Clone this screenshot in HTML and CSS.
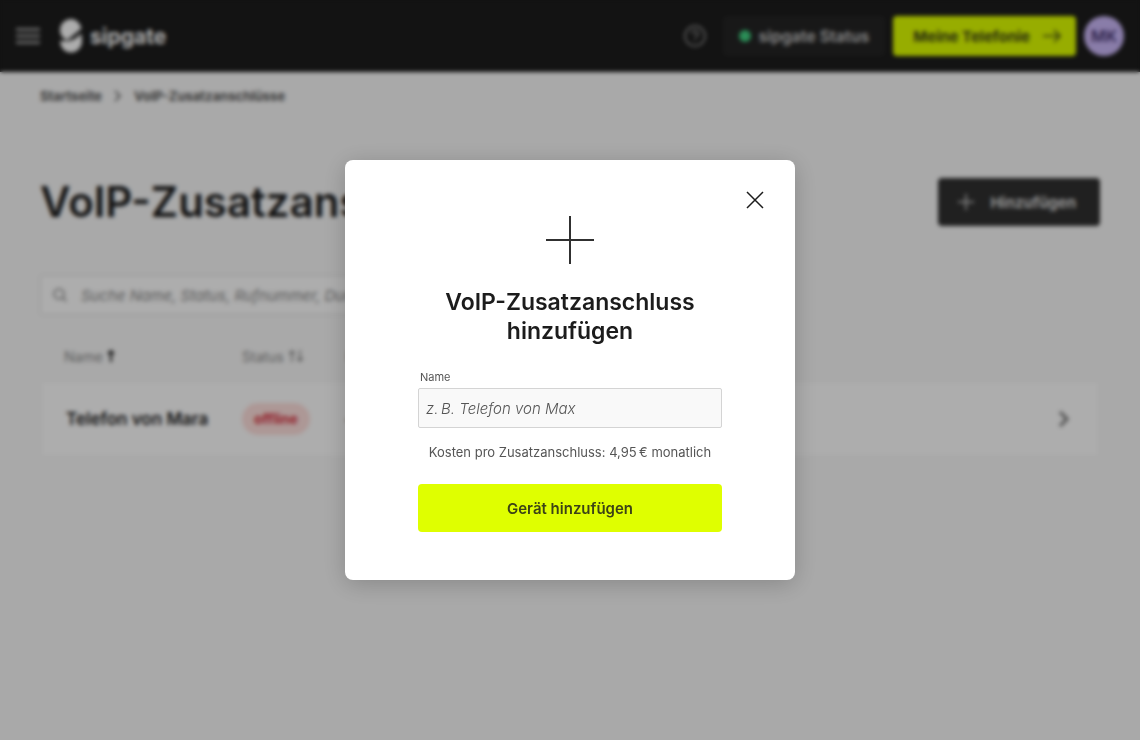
FILE: index.html
```html
<!DOCTYPE html>
<html lang="de">
<head>
  <meta charset="UTF-8">
  <meta name="viewport" content="width=device-width, initial-scale=1.0">
  <title>VoIP-Zusatzanschlüsse</title>
  <link rel="stylesheet" href="styles.css">
</head>
<body>
  <header class="topbar">
    <button class="menu-button" type="button" aria-label="Menü">
      <svg width="24" height="16" viewBox="0 0 24 16" fill="none" stroke="currentColor" stroke-width="3">
        <path d="M0 1.500h24M0 8h24M0 14.500h24"/>
      </svg>
    </button>
    <a class="logo" href="#">
      <svg width="22" height="34" viewBox="0 0 22 34" fill="currentColor">
        <path d="M11 0C16 0 20 4 21.500 9.500L7.500 21C3 20 0 16 0 11 0 5 5 0 11 0Z"/>
        <path d="M0 22h8.500C13 21.500 18 18 21 14.500c.8 2 1 5 1 8C22 28.500 17 33.500 11 33.500 5 33.500 .5 29 0 22Z"/>
      </svg>
      <span>sipgate</span>
    </a>
    <nav class="topbar-nav">
      <a class="help" href="#" aria-label="Hilfe">
        <svg width="24" height="24" viewBox="0 0 24 24" fill="none" stroke="currentColor" stroke-width="1.500">
          <circle cx="12" cy="12" r="10"/>
          <path d="M9 9.700a3 3 0 1 1 4.200 2.700c-.8.4-1.200.8-1.200 1.800M12 16v1.600"/>
        </svg>
      </a>
      <a class="status-link" href="#"><span class="status-dot"></span>sipgate Status</a>
      <a class="phone-link" href="#">Meine Telefonie
        <svg width="20" height="16" viewBox="0 0 20 16" fill="none" stroke="currentColor" stroke-width="1.500">
          <path d="M1 8h17M12 2l6 6-6 6"/>
        </svg>
      </a>
      <button class="avatar" type="button">MK</button>
    </nav>
  </header>

  <main class="page">
    <nav class="breadcrumb">
      <a href="#">Startseite</a>
      <svg width="8" height="12" viewBox="0 0 8 12" fill="none" stroke="currentColor" stroke-width="1.500">
        <path d="M1 1l5 5-5 5"/>
      </svg>
      <a href="#">VoIP-Zusatzanschlüsse</a>
    </nav>

    <div class="page-head">
      <h1>VoIP-Zusatzanschlüsse</h1>
      <button class="add-button" type="button">
        <svg width="16" height="16" viewBox="0 0 16 16" fill="none" stroke="currentColor" stroke-width="1.500">
          <path d="M8 0v16M0 8h16"/>
        </svg>
        Hinzufügen
      </button>
    </div>

    <label class="search">
      <svg width="14" height="14" viewBox="0 0 14 14" fill="none" stroke="currentColor" stroke-width="1.500">
        <circle cx="6" cy="6" r="5"/>
        <path d="M9.600 9.600L13.500 13.500"/>
      </svg>
      <input type="search" aria-label="Suche" placeholder="Suche Name, Status, Rufnummer, Durchwahl">
    </label>

    <table class="devices">
      <thead>
        <tr>
          <th class="col-name">Name
            <svg class="sorted" width="8" height="12" viewBox="0 0 8 12" fill="none" stroke="currentColor" stroke-width="2">
              <path d="M4 12V1M1 4l3-3 3 3"/>
            </svg>
          </th>
          <th class="col-status">Status
            <svg width="16" height="12" viewBox="0 0 16 12" fill="none" stroke="currentColor" stroke-width="1.500">
              <path d="M4 12V1M1 4l3-3 3 3M12 0v11M9 8l3 3 3-3"/>
            </svg>
          </th>
          <th>Rufnummer</th>
          <th class="col-open"></th>
        </tr>
      </thead>
      <tbody>
        <tr>
          <td class="device-name">Telefon von Mara</td>
          <td><span class="badge">offline</span></td>
          <td>–</td>
          <td class="col-open">
            <svg width="12" height="18" viewBox="0 0 12 18" fill="none" stroke="currentColor" stroke-width="3">
              <path d="M2 2l7 7-7 7"/>
            </svg>
          </td>
        </tr>
      </tbody>
    </table>
  </main>

  <div class="overlay">
    <section class="modal" role="dialog" aria-modal="true" aria-labelledby="modal-title">
      <button class="close" type="button" aria-label="Schließen">
        <svg width="18" height="18" viewBox="0 0 18 18" fill="none" stroke="currentColor" stroke-width="1.500">
          <path d="M1 1l16 16M17 1L1 17"/>
        </svg>
      </button>
      <svg class="modal-icon" width="48" height="48" viewBox="0 0 48 48" fill="none" stroke="currentColor" stroke-width="2">
        <path d="M24 0v48M0 24h48"/>
      </svg>
      <h2 id="modal-title">VoIP-Zusatzanschluss hinzufügen</h2>
      <form class="modal-form">
        <label for="device-name">Name</label>
        <input type="text" id="device-name" placeholder="z.&#8239;B. Telefon von Max">
        <p>Kosten pro Zusatzanschluss: 4,95&#8239;€ monatlich</p>
        <button class="submit" type="submit">Gerät hinzufügen</button>
      </form>
    </section>
  </div>
</body>
</html>
```

FILE: styles.css
```css
* {
  box-sizing: border-box;
}

body {
  margin: 0;
  min-height: 100vh;
  background-color: #f9f9f9;
  color: #1c1c1c;
  font-family: Inter, "Liberation Sans", sans-serif;
  font-size: 16px;
}

a {
  color: inherit;
  text-decoration: none;
}

button,
input {
  font: inherit;
}

button {
  padding: 0;
  border: none;
  background: none;
  color: inherit;
  cursor: pointer;
}

svg {
  display: block;
  flex-shrink: 0;
}

.topbar {
  display: flex;
  align-items: center;
  height: 72px;
  padding: 0 16px;
  background-color: #1c1c1c;
  color: #fff;
}

.menu-button {
  color: #999;
}

.logo {
  display: flex;
  align-items: center;
  gap: 8px;
  margin-left: 20px;
  font-size: 21px;
  font-weight: 700;
}

.topbar-nav {
  display: flex;
  align-items: center;
  gap: 8px;
  margin-left: auto;
  font-size: 15px;
  font-weight: 700;
}

.help {
  margin-right: 8px;
  color: #999;
}

.status-link,
.phone-link {
  display: flex;
  align-items: center;
  height: 40px;
  border-radius: 4px;
}

.status-link {
  gap: 8px;
  padding: 0 16px;
  background-color: #242424;
  color: #ccc;
  font-size: 16px;
  font-weight: 600;
}

.status-dot {
  width: 12px;
  height: 12px;
  border-radius: 50%;
  background-color: #40d080;
}

.phone-link {
  gap: 12px;
  padding: 0 14px 0 20px;
  background-color: #dfff00;
  color: #3c4316;
}

.avatar {
  width: 40px;
  height: 40px;
  border-radius: 50%;
  background-color: #cbb8f9;
  color: #453470;
  font-size: 16px;
  font-weight: 600;
}

.page {
  padding: 15px 40px;
}

.breadcrumb {
  display: flex;
  align-items: center;
  gap: 12px;
  color: #555;
  font-size: 13px;
  line-height: 18px;
  font-weight: 700;
}

.page-head {
  display: flex;
  align-items: center;
  justify-content: space-between;
  margin: 72px 0 48px;
}

.page-head h1 {
  margin: 0;
  font-size: 42px;
  line-height: 50px;
  font-weight: 600;
}

.add-button {
  display: flex;
  align-items: center;
  gap: 16px;
  height: 48px;
  padding: 0 24px 0 20px;
  border-radius: 4px;
  background-color: #303030;
  color: #ddd;
  font-size: 15px;
  font-weight: 700;
}

.search {
  display: flex;
  align-items: center;
  gap: 12px;
  max-width: 420px;
  height: 40px;
  padding: 0 12px;
  border: 1px solid #e0e0e0;
  border-radius: 2px;
  background-color: #fff;
  color: #888;
}

.search input {
  flex: 1;
  border: none;
  background: none;
  font-size: 15px;
}

.search input::placeholder {
  color: #888;
  font-style: italic;
}

.devices {
  width: 100%;
  margin-top: 16px;
  border: solid transparent;
  border-width: 0 2px;
  border-collapse: separate;
  border-spacing: 0;
}

.devices th {
  height: 50px;
  padding: 0 16px;
  color: #888;
  font-size: 14px;
  font-weight: 400;
  text-align: left;
}

.devices th svg {
  display: inline-block;
}

.devices .sorted {
  color: #1c1c1c;
}

.devices .col-name {
  width: 184px;
  padding: 0 22px;
}

.devices .col-status {
  width: 104px;
  white-space: nowrap;
}

.devices td {
  height: 76px;
  padding: 0 16px;
  border: solid #f3f3f3;
  border-width: 1px 0;
  background-color: #fff;
}

.devices .device-name {
  padding: 0 0 0 24px;
  font-size: 17px;
  font-weight: 600;
  white-space: nowrap;
}

.devices td.col-open {
  padding: 0 28px;
  color: #777;
}

.col-open svg {
  margin-left: auto;
}

.badge {
  display: inline-block;
  padding: 0 12px;
  border-radius: 16px;
  background-color: #ffe0dd;
  color: #d8323f;
  font-size: 14px;
  line-height: 32px;
  font-weight: 700;
}

.overlay {
  position: fixed;
  inset: 0;
  display: flex;
  align-items: center;
  justify-content: center;
  background-color: rgba(0, 0, 0, 0.32);
  backdrop-filter: blur(2px);
}

.modal {
  position: relative;
  display: flex;
  flex-direction: column;
  align-items: center;
  width: 100%;
  max-width: 450px;
  padding: 56px 32px 48px;
  border-radius: 8px;
  background-color: #fff;
  box-shadow: 0 4px 24px rgba(0, 0, 0, 0.2);
}

.close {
  position: absolute;
  top: 20px;
  right: 20px;
  display: flex;
  align-items: center;
  justify-content: center;
  width: 40px;
  height: 40px;
}

.modal-icon {
  color: #303030;
}

.modal h2 {
  max-width: 304px;
  margin: 24px 0;
  font-size: 23px;
  line-height: 29px;
  font-weight: 600;
  text-align: center;
}

.modal-form {
  display: flex;
  flex-direction: column;
  width: 100%;
  max-width: 304px;
}

.modal-form label {
  padding: 0 2px;
  color: #555;
  font-size: 11px;
  line-height: 14px;
}

.modal-form input {
  height: 40px;
  margin-top: 4px;
  padding: 0 7px;
  border: 1px solid #d4d4d4;
  border-radius: 2px;
  background-color: #f9f9f9;
  font-size: 15px;
}

.modal-form input::placeholder {
  color: #555;
  font-style: italic;
  font-weight: 300;
}

.modal-form p {
  margin: 16px 0 24px;
  color: #555;
  font-size: 13px;
  line-height: 16px;
  text-align: center;
}

.submit {
  height: 48px;
  border-radius: 4px;
  background-color: #dfff00;
  color: #3c4316;
  font-size: 15px;
  font-weight: 600;
}
```
